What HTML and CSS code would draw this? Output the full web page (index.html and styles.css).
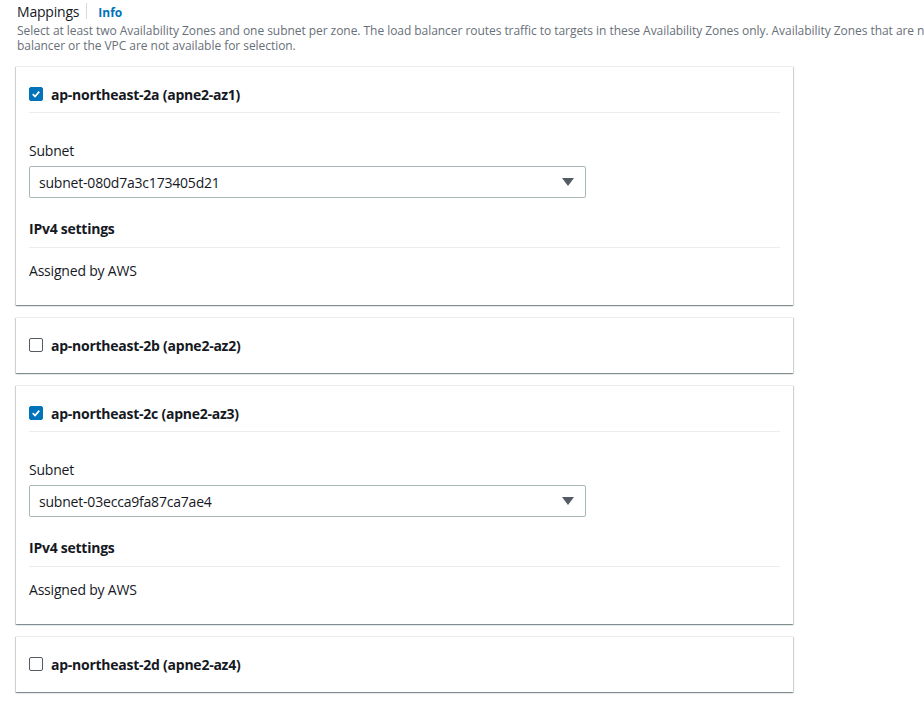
FILE: index.html
```html
<!DOCTYPE html>
<html>
<head>
<meta charset="utf-8">
<link rel="stylesheet" href="styles.css">
</head>
<body>
<div class="page">
  <div class="section-head">
    <span class="title">Mappings</span>
    <span class="sep"></span>
    <a class="info">Info</a>
  </div>
  <p class="desc">Select at least two Availability Zones and one subnet per zone. The load balancer routes traffic to targets in these Availability Zones only. Availability Zones that are not supported by the load<br>balancer or the VPC are not available for selection.</p>

  <div class="cards">
    <div class="card">
      <div class="card-head expanded">
        <span class="cb checked"><svg viewBox="0 0 14 14" width="14" height="14"><path d="M3.2 7.2 L5.9 9.9 L10.8 4.2" fill="none" stroke="#fff" stroke-width="2"/></svg></span>
        <span class="az">ap-northeast-2a (apne2-az1)</span>
      </div>
      <div class="card-body">
        <div class="label">Subnet</div>
        <div class="select"><span>subnet-080d7a3c173405d21</span><span class="caret"></span></div>
        <div class="sub-head">IPv4 settings</div>
        <div class="value">Assigned by AWS</div>
      </div>
    </div>

    <div class="card">
      <div class="card-head">
        <span class="cb"></span>
        <span class="az">ap-northeast-2b (apne2-az2)</span>
      </div>
    </div>

    <div class="card">
      <div class="card-head expanded">
        <span class="cb checked"><svg viewBox="0 0 14 14" width="14" height="14"><path d="M3.2 7.2 L5.9 9.9 L10.8 4.2" fill="none" stroke="#fff" stroke-width="2"/></svg></span>
        <span class="az">ap-northeast-2c (apne2-az3)</span>
      </div>
      <div class="card-body">
        <div class="label">Subnet</div>
        <div class="select"><span>subnet-03ecca9fa87ca7ae4</span><span class="caret"></span></div>
        <div class="sub-head">IPv4 settings</div>
        <div class="value">Assigned by AWS</div>
      </div>
    </div>

    <div class="card">
      <div class="card-head">
        <span class="cb"></span>
        <span class="az">ap-northeast-2d (apne2-az4)</span>
      </div>
    </div>
  </div>
</div>
</body>
</html>
```
FILE: styles.css
```css
html {
  overflow: hidden;
}
body {
  margin: 0;
  padding: 0;
  background: #fff;
  font-family: "Open Sans", "Liberation Sans", sans-serif;
  color: #16191f;
}
.page {
  padding: 1px 0 20px 17px;
  width: 1100px;
}
.section-head {
  display: flex;
  align-items: center;
  height: 20px;
}
.title {
  font-size: 14px;
  line-height: 19px;
  letter-spacing: -0.2px;
  color: #16191f;
}
.sep {
  width: 1px;
  height: 16px;
  background: #d5dbdb;
  margin: 0 11px 0 7px;
}
.info {
  font-size: 12px;
  font-weight: 700;
  color: #0073bb;
  padding-top: 2px;
}
.desc {
  margin: 2px 0 0;
  font-size: 12px;
  line-height: 15px;
  letter-spacing: -0.05px;
  color: #687078;
  white-space: nowrap;
}
.cards {
  margin-top: 13px;
  margin-left: -1px;
  width: 777px;
  display: flex;
  flex-direction: column;
  gap: 12px;
}
.card {
  background: #fff;
  border-top: 1px solid #eaeded;
  box-shadow: 0 1px 1px 0 rgba(0,28,36,.3), 1px 1px 1px 0 rgba(0,28,36,.15), -1px 1px 1px 0 rgba(0,28,36,.15);
  padding: 18px 13px 19px;
}
.card-head {
  display: flex;
  align-items: center;
  height: 18px;
}
.card-head.expanded {
  padding-bottom: 9px;
  border-bottom: 1px solid #eaeded;
}
.cb {
  width: 12px;
  height: 12px;
  border: 1px solid #545b64;
  border-radius: 2px;
  margin-right: 8px;
  display: flex;
  align-items: center;
  justify-content: center;
  box-sizing: content-box;
}
.cb.checked {
  background: #0073bb;
  border-color: #0073bb;
}
.cb svg { display: block; }
.az {
  font-size: 14px;
  font-weight: 700;
  letter-spacing: -0.25px;
}
.card-body {
  padding-bottom: 5px;
}
.label {
  margin-top: 27px;
  font-size: 14px;
  line-height: 22px;
  letter-spacing: -0.2px;
}
.select {
  margin-top: 4px;
  width: 557px;
  border: 1px solid #aab7b8;
  border-radius: 2px;
  display: flex;
  align-items: center;
  justify-content: space-between;
  padding: 0 9px 0 9px;
  box-sizing: border-box;
  height: 32px;
  font-size: 14px;
  letter-spacing: -0.2px;
}
.caret {
  width: 0;
  height: 0;
  margin-right: 2px;
  border-left: 6px solid transparent;
  border-right: 6px solid transparent;
  border-top: 8px solid #545b64;
}
.sub-head {
  margin-top: 21px;
  font-size: 14px;
  font-weight: 700;
  line-height: 20px;
  letter-spacing: -0.25px;
  padding-bottom: 8px;
  border-bottom: 1px solid #eaeded;
}
.value {
  margin-top: 13px;
  font-size: 14px;
  line-height: 20px;
  letter-spacing: -0.2px;
}
```
